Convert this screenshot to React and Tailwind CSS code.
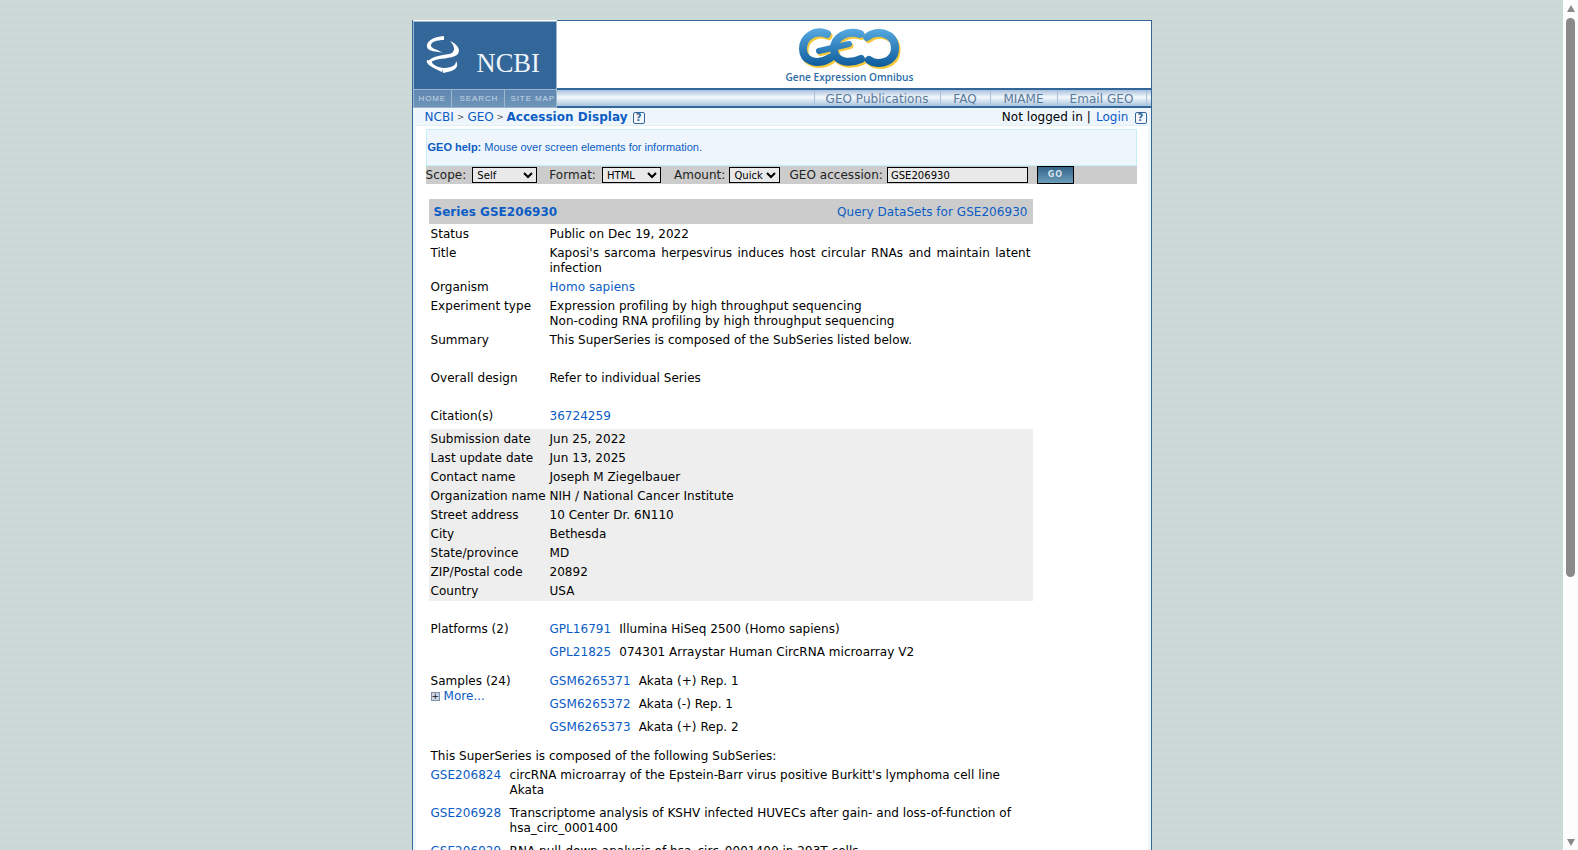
const link = 'text-[#0b5cc4]';

function Row({ label, children, className = '' }) {
  return (
    <div className={`grid grid-cols-[119px_1fr] px-[2px] py-[2px] ${className}`}>
      <div>{label}</div>
      <div>{children}</div>
    </div>
  );
}

function Help() {
  return (
    <span className="inline-flex items-center justify-center w-[12px] h-[12px] rounded-[2px] border border-[#336699] text-[10px] leading-none font-bold text-[#336699] bg-[#f4f8fc]">?</span>
  );
}

const GEO_STROKES = [
  'M42 13C30 8 18 16 18 28C18 40 32 45 45 37',
  'M75 13C62 9 49 16 49 28C49 40 62 44 76 38',
  'M82 16C92 8 110 12 110 27C110 42 92 45 84 39',
];

function GeoLogo() {
  return (
    <svg width="140" height="50" viewBox="0 0 140 50" className="block shrink-0">
      <defs>
        <linearGradient id="geoBlue" gradientUnits="userSpaceOnUse" x1="0" y1="8" x2="0" y2="46">
          <stop offset="0" stopColor="#55a8e0" />
          <stop offset="1" stopColor="#0d5a9a" />
        </linearGradient>
      </defs>
      <g fill="none" strokeLinecap="round" strokeWidth="8">
        <g stroke="#f5c93c" transform="translate(1.5 2)">
          {GEO_STROKES.map((d) => <path key={d} d={d} />)}
          <path d="M34 30L64 23" strokeWidth="6" />
        </g>
        <g stroke="url(#geoBlue)">
          {GEO_STROKES.map((d) => <path key={d} d={d} />)}
          <path d="M34 30L64 23" strokeWidth="6" />
        </g>
      </g>
    </svg>
  );
}

function NcbiHelix() {
  return (
    <svg width="40" height="42" viewBox="10 8 40 42" className="block" fill="#fff">
      <path d="M31 10C20 11 13 15 14 21C15 26 24 25 30 27C24 23 19 23 18 20C17 16 24 14 31 14Z" />
      <path d="M37 15C46 19 48 25 44 29C38 33 26 32 20 35L15 36C17 31 28 29 36 28C42 27 43 21 37 15Z" />
      <path d="M14 34C12 38 20 42 29 46L30 42C24 41 18 38 19 35Z" />
      <path d="M43 35C46 40 44 45 30 47L29 42C36 42 43 41 43 35Z" />
    </svg>
  );
}

export default function App() {
  return (
    <div className="flex h-[850px] overflow-hidden font-['DejaVu_Sans',sans-serif] text-[12px] leading-[15px] tracking-[0.04px] text-black">
      <div className="flex-1 min-w-0 pt-5 bg-[repeating-linear-gradient(to_bottom,#cdd9d6_0,#cdd9d6_7px,#c7d7d6_7px,#c7d7d6_8px)]">
        <div className="w-[740px] mx-auto border-x border-[#336699] bg-white">
          {/* Masthead */}
          <div className="flex h-[88px]">
            <div className="w-[144px] shrink-0 mt-[1px] flex flex-col border border-[#9db7d0] bg-[#336699]">
              <div className="flex-1 flex pl-[9px] pt-[12px]">
                <NcbiHelix />
                <span className="ml-[14px] mt-[14px] font-['Liberation_Serif',serif] text-[26.5px] leading-[30px] text-[#eef4fa] tracking-normal">NCBI</span>
              </div>
              <div className="flex h-[18px] border-t border-[#9db7d0] bg-gradient-to-b from-[#5f88b0] to-[#6f94b8] font-['Liberation_Sans',sans-serif] text-[#c4d5e5] text-[8px] leading-[17px] tracking-[0.9px]">
                <span className="w-[38px] pl-[5px] border-r border-[#9db7d0]">HOME</span>
                <span className="w-[53px] pl-[8px] border-r border-[#9db7d0]">SEARCH</span>
                <span className="pl-[6px] whitespace-nowrap">SITE MAP</span>
              </div>
            </div>
            <div className="flex-1 flex flex-col min-w-0">
              <div className="h-[70px] shrink-0 border-t border-b-2 border-[#336699] pl-[228px] flex flex-col">
                <GeoLogo />
                <span className="w-[130px] text-center font-['Open_Sans',sans-serif] font-semibold text-[10.1px] leading-[12px] tracking-normal text-[#2b6ca8] whitespace-nowrap">Gene Expression Omnibus</span>
              </div>
              <div className="h-[18px] shrink-0 flex justify-end pr-[4px] border-b-2 border-[#336699] bg-[linear-gradient(to_bottom,#a8c0dc,#f4f8fc_45%,#a8c4df)] text-[12px] leading-[18px] text-[#5a7a9a]">
                <span className="w-[127px] text-center border-x border-[#a9c2db]">GEO Publications</span>
                <span className="w-[50px] text-center border-r border-[#a9c2db]">FAQ</span>
                <span className="w-[67px] text-center border-r border-[#a9c2db]">MIAME</span>
                <span className="w-[89px] text-center border-r border-[#a9c2db]">Email GEO</span>
              </div>
            </div>
          </div>

          <div className="border-x-[3px] border-[#eef6fc]">
            {/* Breadcrumb */}
            <div className="flex justify-between items-center h-[18px] pt-[2px] pl-[9px] pr-[1px] bg-[#eef6fc] border-b border-[#e2f0f4]">
              <div className="flex items-center">
                <span className={link}>NCBI</span>
                <span className="mx-[3px] text-[9px] text-[#555]">&gt;</span>
                <span className={link}>GEO</span>
                <span className="mx-[2.5px] text-[9px] text-[#555]">&gt;</span>
                <span className={`${link} font-bold`}>Accession Display</span>
                <span className="ml-[5px] flex"><Help /></span>
              </div>
              <div className="flex items-center">
                <span>Not logged in</span>
                <span className="ml-[4px] mr-[5px]">|</span>
                <span className={link}>Login</span>
                <span className="ml-[6px] flex"><Help /></span>
              </div>
            </div>

            <div className="pl-[10px] pr-[11px] pt-[3px]">
              {/* Help */}
              <div className="h-[37px] flex items-center pl-[1px] bg-[#eef6fc] border border-[#c5f0f5] font-['Liberation_Sans',sans-serif] text-[11px] tracking-normal text-[#0b5cc4]">
                <b>GEO help:</b>&nbsp;Mouse over screen elements for information.
              </div>
              {/* Query bar */}
              <div className="h-[18px] flex items-center bg-[#cccccc] text-[#222]">
                <span>Scope:</span>
                <select className="ml-[6px] w-[65px] h-[16px] border border-black bg-[#e9e9e9] text-[10px] text-black">
                  <option>Self</option>
                </select>
                <span className="ml-[12px]">Format:</span>
                <select className="ml-[6px] w-[59px] h-[16px] border border-black bg-[#e9e9e9] text-[10px] text-black">
                  <option>HTML</option>
                </select>
                <span className="ml-[13px]">Amount:</span>
                <select className="ml-[4px] w-[51px] h-[16px] border border-black bg-[#e9e9e9] text-[10px] text-black">
                  <option>Quick</option>
                </select>
                <span className="ml-[9px]">GEO accession:</span>
                <input readOnly value="GSE206930" className="ml-[4px] w-[141px] h-[16px] border border-black bg-[#e9e9e9] text-[10px] pl-[3px] text-black" />
                <span className="ml-[9px] w-[37px] h-[18px] border border-black bg-gradient-to-b from-[#336688] to-[#6d9cbb] text-center text-[8px] leading-[16px] font-bold tracking-[1px] text-[#d8e4ec]">GO</span>
              </div>

              {/* Record */}
              <div className="w-[604px] mt-[15px] ml-[3px]">
                <div className="h-[25px] flex justify-between items-center pt-[1px] px-[5px] bg-[#cccccc]">
                  <span className={`${link} font-bold`}>Series GSE206930</span>
                  <span className={link}>Query DataSets for GSE206930</span>
                </div>
                <Row label="Status" className="mt-[1px]">Public on Dec 19, 2022</Row>
                <Row label="Title">
                  <div className="text-justify">Kaposi's sarcoma herpesvirus induces host circular RNAs and maintain latent infection</div>
                </Row>
                <Row label="Organism"><span className={link}>Homo sapiens</span></Row>
                <Row label="Experiment type">Expression profiling by high throughput sequencing<br />Non-coding RNA profiling by high throughput sequencing</Row>
                <Row label="Summary" className="mb-[4px]">This SuperSeries is composed of the SubSeries listed below.<br />&nbsp;</Row>
                <Row label="Overall design" className="mb-[4px]">Refer to individual Series<br />&nbsp;</Row>
                <Row label="Citation(s)" className="mb-[3px]"><span className={link}>36724259</span></Row>
                <div className="bg-[#eeeeee] pt-[1px]">
                  <Row label="Submission date">Jun 25, 2022</Row>
                  <Row label="Last update date">Jun 13, 2025</Row>
                  <Row label="Contact name">Joseph M Ziegelbauer</Row>
                  <Row label="Organization name">NIH / National Cancer Institute</Row>
                  <Row label="Street address">10 Center Dr. 6N110</Row>
                  <Row label="City">Bethesda</Row>
                  <Row label="State/province">MD</Row>
                  <Row label="ZIP/Postal code">20892</Row>
                  <Row label="Country">USA</Row>
                </div>
                <div className="h-[19px]" />
                <Row label="Platforms (2)">
                  <div className="flex flex-col gap-[8px]">
                    <div className="flex gap-[8px]"><span className={link}>GPL16791</span><span>Illumina HiSeq 2500 (Homo sapiens)</span></div>
                    <div className="flex gap-[8px]"><span className={link}>GPL21825</span><span>074301 Arraystar Human CircRNA microarray V2</span></div>
                  </div>
                </Row>
                <Row className="mt-[10px]" label={
                  <>
                    <div>Samples (24)</div>
                    <div className="flex items-center gap-[4px]">
                      <span className="w-[9px] h-[9px] border border-[#7f8fa8] bg-[#cfd6e6] text-[9px] leading-[6px] text-center text-[#112]">+</span>
                      <span className={link}>More...</span>
                    </div>
                  </>
                }>
                  <div className="flex flex-col gap-[8px]">
                    <div className="flex gap-[8px]"><span className={link}>GSM6265371</span><span>Akata (+) Rep. 1</span></div>
                    <div className="flex gap-[8px]"><span className={link}>GSM6265372</span><span>Akata (-) Rep. 1</span></div>
                    <div className="flex gap-[8px]"><span className={link}>GSM6265373</span><span>Akata (+) Rep. 2</span></div>
                  </div>
                </Row>
                <div className="mt-[10px] px-[2px] py-[2px]">This SuperSeries is composed of the following SubSeries:</div>
                <div className="grid grid-cols-[79px_1fr] gap-y-[8px] px-[2px] pt-[2px]">
                  <span className={link}>GSE206824</span>
                  <span>circRNA microarray of the Epstein-Barr virus positive Burkitt's lymphoma cell line Akata</span>
                  <span className={link}>GSE206928</span>
                  <span>Transcriptome analysis of KSHV infected HUVECs after gain- and loss-of-function of hsa_circ_0001400</span>
                  <span className={link}>GSE206929</span>
                  <span>RNA pull-down analysis of hsa_circ_0001400 in 293T cells</span>
                </div>
              </div>
            </div>
          </div>
        </div>
      </div>

      {/* Scrollbar */}
      <div className="w-[15px] shrink-0 flex flex-col items-center bg-[#fdfdfd] pt-[5px]">
        <div className="w-0 h-0 border-x-[4.5px] border-b-[7px] border-x-transparent border-b-[#8a8a8a]" />
        <div className="mt-[6px] w-[9px] h-[559px] rounded-full bg-[#8a8a8a]" />
        <div className="mt-auto mb-[4px] w-0 h-0 border-x-[4.5px] border-t-[7px] border-x-transparent border-t-[#8a8a8a]" />
      </div>
    </div>
  );
}
